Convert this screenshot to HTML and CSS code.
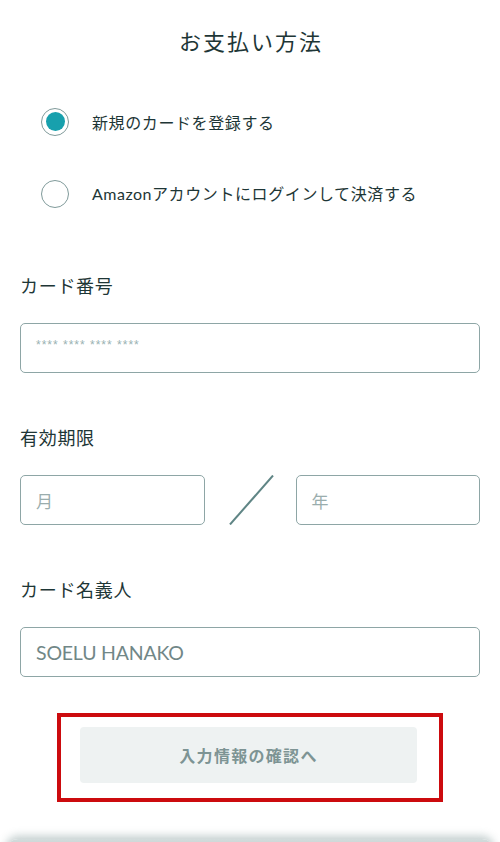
FILE: index.html
```html
<!DOCTYPE html>
<html lang="ja">
<head>
<meta charset="utf-8">
<title>お支払い方法</title>
<link rel="stylesheet" href="styles.css">
</head>
<body>
<main class="page">
  <h1 class="title">お支払い方法</h1>

  <div class="methods">
    <label class="method">
      <span class="radio radio-on"><span class="dot"></span></span>
      <span class="method-text">新規のカードを登録する</span>
    </label>
    <label class="method">
      <span class="radio"></span>
      <span class="method-text"><span class="latin">Amazon</span>アカウントにログインして決済する</span>
    </label>
  </div>

  <section class="field field-first">
    <div class="field-label">カード番号</div>
    <div class="input"><span class="ph-stars">**** **** **** ****</span></div>
  </section>

  <section class="field">
    <div class="field-label">有効期限</div>
    <div class="expiry">
      <div class="input"><span class="ph">月</span></div>
      <svg class="slash" width="91" height="50" viewBox="0 0 91 50"><line x1="25" y1="49.5" x2="68" y2="0.5" stroke="#5f8585" stroke-width="2"/></svg>
      <div class="input"><span class="ph">年</span></div>
    </div>
  </section>

  <section class="field">
    <div class="field-label">カード名義人</div>
    <div class="input"><span class="value">SOELU HANAKO</span></div>
  </section>

  <div class="highlight">
    <button class="confirm" type="button">入力情報の確認へ</button>
  </div>

  <div class="footer-edge"></div>
</main>
</body>
</html>
```

FILE: styles.css
```css
* { box-sizing: border-box; }
html, body { margin: 0; padding: 0; background: #fff; }
body {
  width: 500px;
  height: 842px;
  overflow: hidden;
  font-family: Lato, "Noto Sans CJK JP", sans-serif;
  color: #1e3636;
}
.page {
  padding: 24px 20px 0;
}
.title {
  margin: 0;
  text-align: center;
  font-family: "Noto Sans CJK JP", sans-serif;
  font-weight: 400;
  font-size: 22px;
  line-height: 33px;
  letter-spacing: 2px;
  padding-left: 2px;
}
.methods {
  margin-top: 51px;
  padding-left: 21px;
  display: flex;
  flex-direction: column;
  gap: 45px;
}
.method {
  display: flex;
  align-items: center;
  gap: 23px;
  height: 27px;
}
.radio {
  width: 28px;
  height: 28px;
  border-radius: 50%;
  border: 1.5px solid #7f9a9a;
  display: flex;
  align-items: center;
  justify-content: center;
  flex: none;
}
.dot {
  width: 19px;
  height: 19px;
  border-radius: 50%;
  background: #17a0ad;
}
.method-text {
  font-family: "Noto Sans CJK JP", sans-serif;
  font-size: 16px;
  letter-spacing: 0.6px;
  line-height: 24px;
}
.latin {
  font-family: Lato, sans-serif;
  font-weight: 400;
  letter-spacing: 0.5px;
}
.field { margin-top: 51px; }
.field-first { margin-top: 65px; }
.field-label {
  font-family: "Noto Sans CJK JP", sans-serif;
  font-size: 18px;
  line-height: 27px;
  letter-spacing: 0.7px;
  margin-bottom: 24px;
}
.input {
  height: 50px;
  border: 1.5px solid #8ea6a6;
  border-radius: 5px;
  padding: 0 15px;
  display: flex;
  align-items: center;
}
.ph-stars {
  font-family: "Liberation Sans", sans-serif;
  font-size: 12px;
  color: #9ab2b2;
  letter-spacing: 1px;
  margin-top: -6px;
}
.ph {
  font-family: "Noto Sans CJK JP", sans-serif;
  font-size: 17px;
  color: #9aadad;
}
.value {
  font-family: Lato, sans-serif;
  font-size: 19.5px;
  color: #718787;
  letter-spacing: -0.2px;
}
.expiry {
  display: grid;
  grid-template-columns: 1fr 91px 1fr;
  align-items: center;
}
.slash { display: block; }
.highlight {
  width: 386px;
  margin: 36px auto 0;
  border: 4px solid #cc0b0e;
  padding: 10px 22px 15px 19px;
}
.confirm {
  display: block;
  width: 100%;
  height: 56px;
  border: none;
  border-radius: 4px;
  background: #eef2f2;
  font-family: "Noto Sans CJK JP", sans-serif;
  font-weight: 700;
  font-size: 16px;
  letter-spacing: 1.3px;
  color: #7d9494;
}
.footer-edge {
  margin: 37px -14px 0;
  height: 20px;
  border-radius: 12px 12px 0 0;
  background: linear-gradient(#d3dcdc, #b9c6c6);
  box-shadow: 0 -3px 8px rgba(120, 145, 145, 0.45);
}
```
